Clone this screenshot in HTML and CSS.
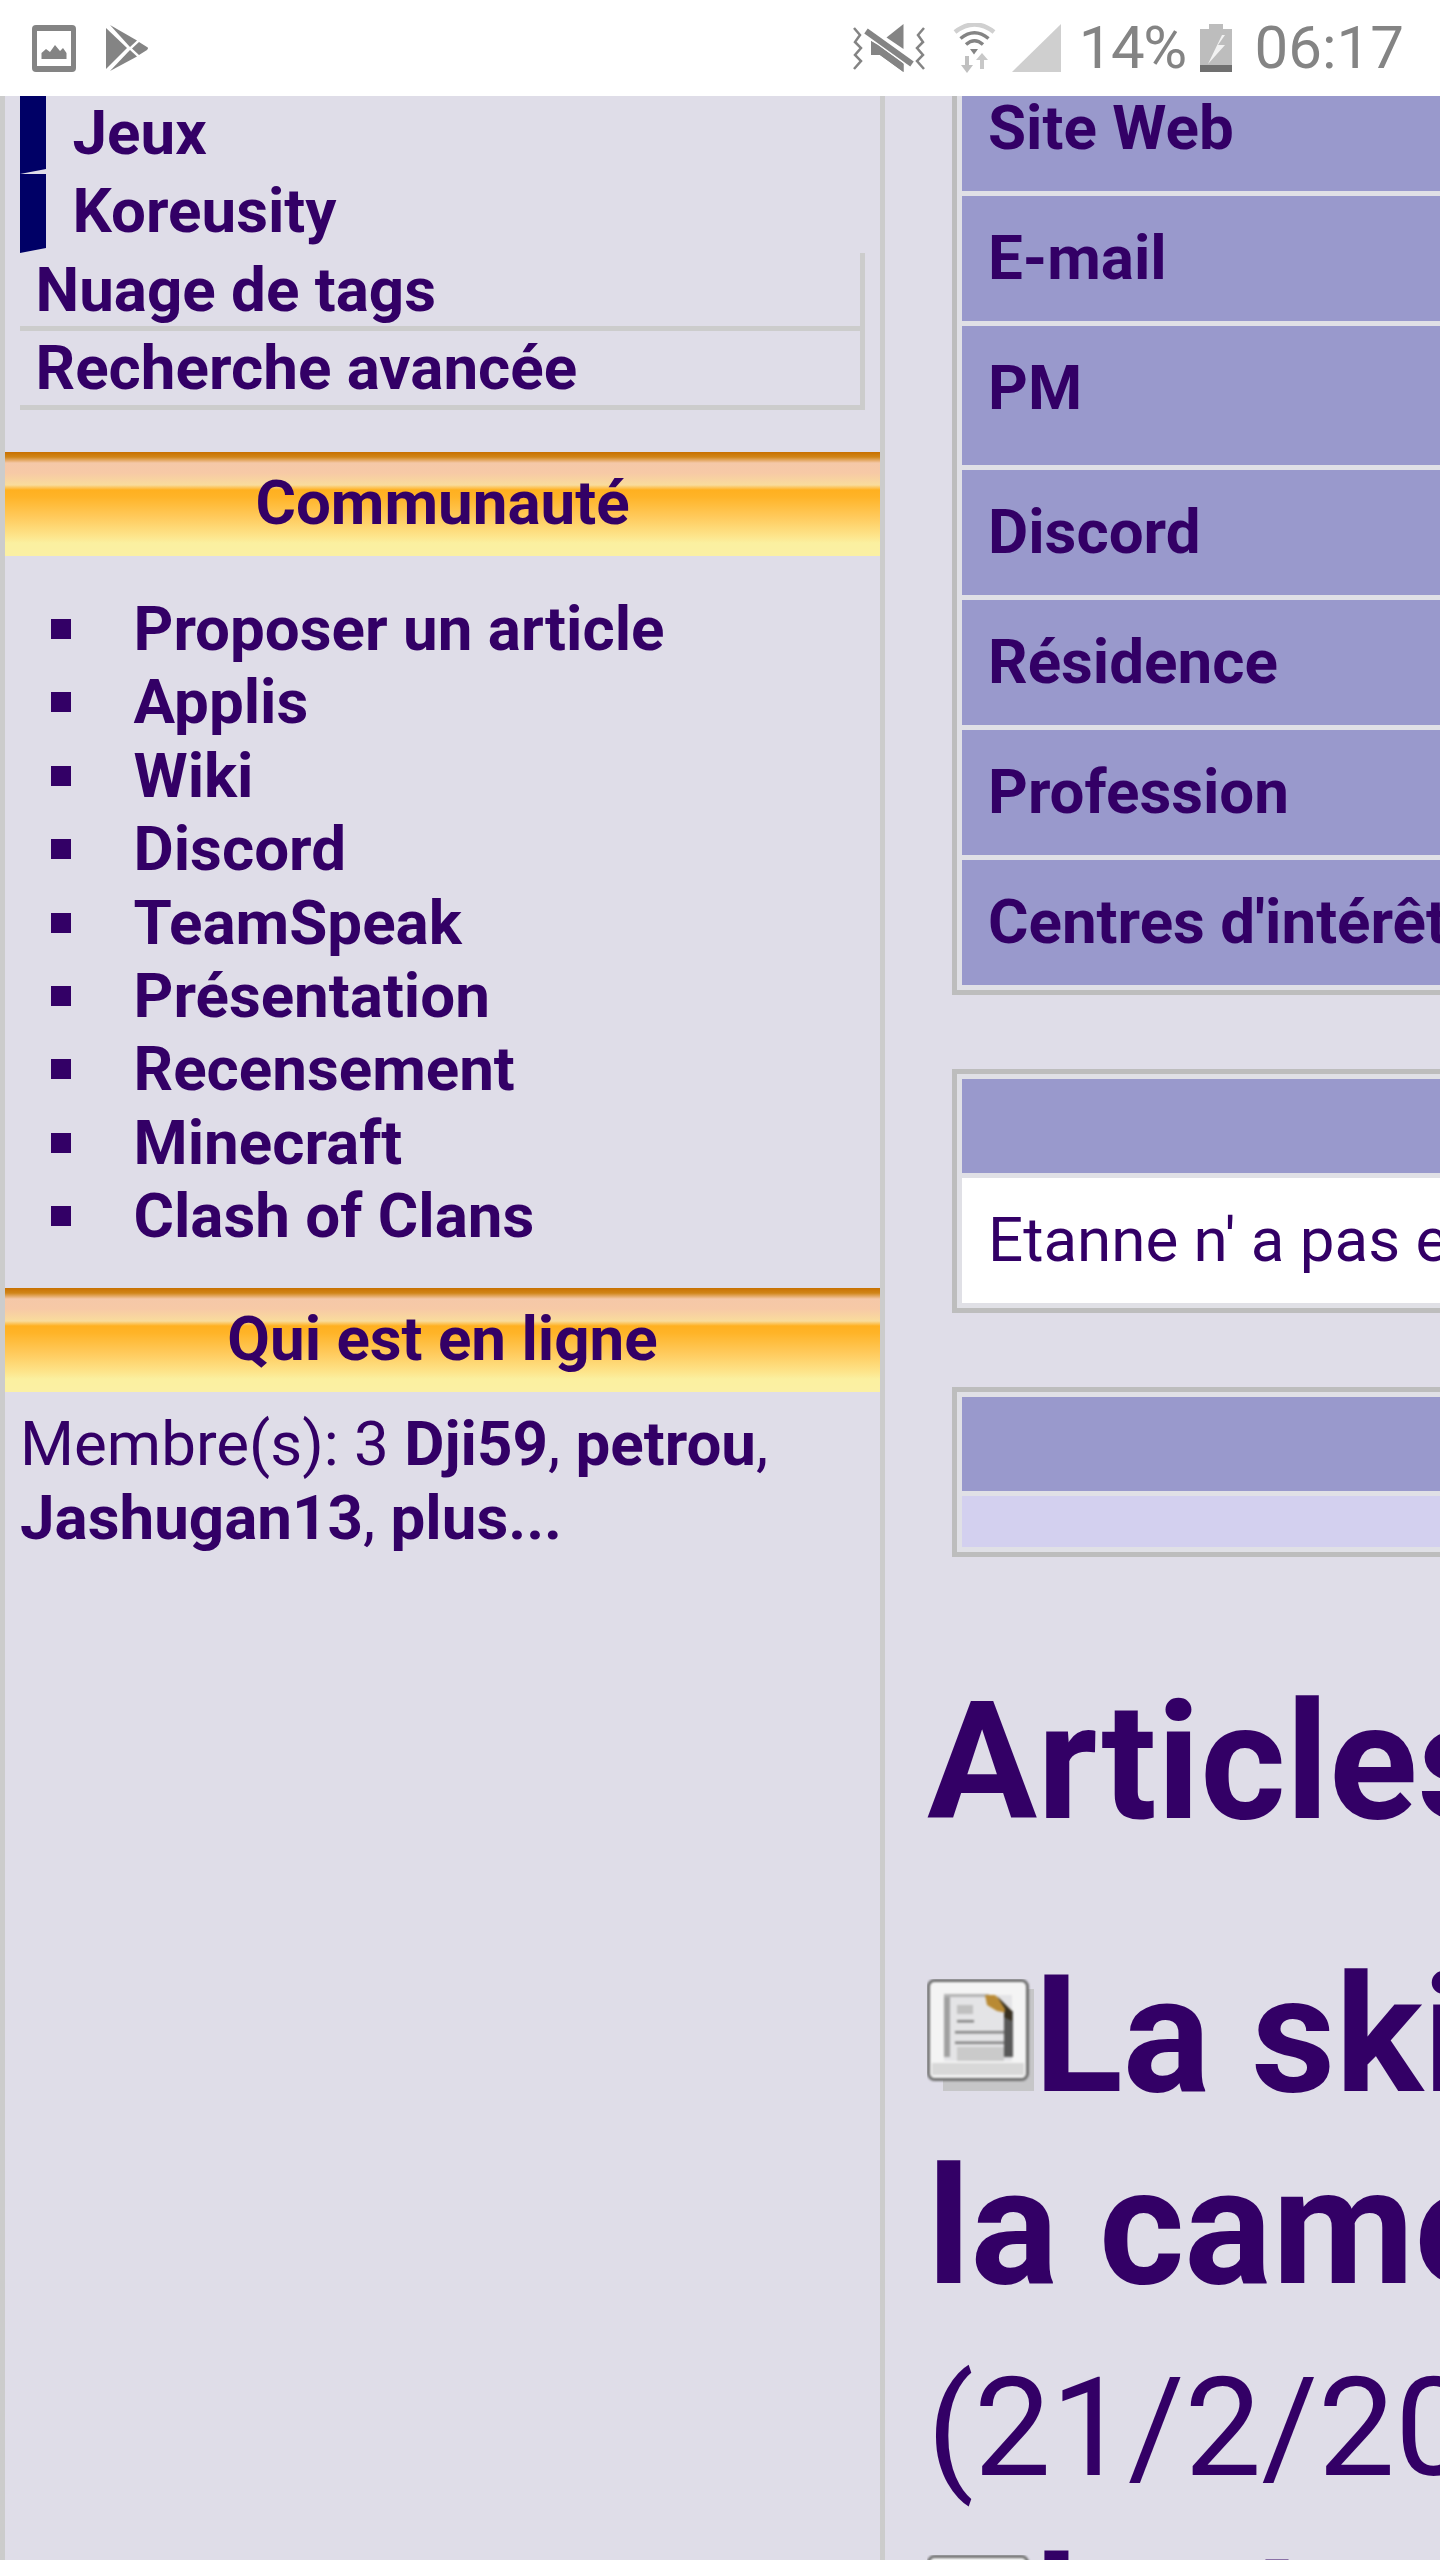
FILE: index.html
```html
<!DOCTYPE html>
<html lang="fr">
<head>
<meta charset="utf-8">
<title>Profil</title>
<link rel="stylesheet" href="styles.css">
</head>
<body>
<svg class="defs" aria-hidden="true">
  <defs>
    <filter id="soft" x="-10%" y="-10%" width="120%" height="120%"><feGaussianBlur stdDeviation="1.1"/></filter>
    <symbol id="doc" viewBox="0 0 107 112">
      <rect x="16" y="10" width="91" height="102" fill="#c6c6c8"/>
      <g filter="url(#soft)">
        <rect x="1.5" y="1.5" width="99" height="99" rx="6" fill="#f4f4f4" stroke="#6e6e6e" stroke-width="3"/>
        <rect x="5" y="84" width="92" height="12" fill="#d8d8d8"/>
        <rect x="17" y="16" width="68" height="66" fill="#e4e4e6"/>
        <rect x="17" y="18" width="6" height="60" fill="#a0a0a0"/>
        <rect x="17" y="15" width="45" height="3" fill="#b4b4b4"/>
        <rect x="30" y="68" width="47" height="14" fill="#cacaca"/>
        <rect x="30" y="26" width="16" height="9" fill="#c0c0c0"/>
        <rect x="30" y="41" width="17" height="2.500" fill="#848484"/>
        <rect x="28" y="52" width="50" height="2.500" fill="#848484"/>
        <rect x="28" y="62.500" width="50" height="2.500" fill="#848484"/>
        <rect x="77" y="32" width="9" height="46" fill="#585858"/>
        <path d="M58 16H68L80 28V34L70 32L60 26Z" fill="#b98a34"/>
        <path d="M70 17L85 32V42L77 38L78 30Z" fill="#38301f"/>
      </g>
    </symbol>
  </defs>
</svg>

<header class="status">
  <div class="status-left">
    <svg class="ic-pic" viewBox="0 0 44 47"><rect width="44" height="47" rx="4" fill="#848484"/><rect x="5" y="6" width="34" height="35" fill="#fff"/><path d="M9.500 34V28L14 24L18 27L23 20L28 26L31 23L34.500 28V34Z" fill="#848484"/></svg>
    <svg class="ic-play" viewBox="0 0 43 46"><path d="M0 3L21 23L0 44Z" fill="#848484"/><path d="M4 0L31 15.500L24 22Z" fill="#848484"/><path d="M33 17L41 22Q43 23 41 25L33 30L26 23.500Z" fill="#848484"/><path d="M4 46L31 31.500L24 25Z" fill="#848484"/></svg>
  </div>
  <div class="status-right">
    <svg class="ic-mute" viewBox="0 0 72 48"><path d="M1 4L7 11L2 18L8 24L2 31L8 37L1 45M71 4L65 11L70 18L64 24L70 31L64 37L71 45" fill="none" stroke="#848484" stroke-width="2.500"/><path d="M50.500 0V25L33.500 13.500Z" fill="#848484"/><path d="M18 17V31H27L50.500 48V38Z" fill="#848484"/><path d="M13 7L59 40" stroke="#fff" stroke-width="9"/><path d="M13 7L59 40" stroke="#848484" stroke-width="6"/><path d="M18 17V31H27L50.500 48V40L25 21Z" fill="#848484"/></svg>
    <svg class="ic-wifi" viewBox="0 0 43 50"><path d="M2 9Q21.500 -6 41 9" fill="none" stroke="#d0d0d0" stroke-width="4.500"/><path d="M7.500 15.500Q21.500 4 35.500 15.500" fill="none" stroke="#848484" stroke-width="3.500"/><path d="M13 21.500Q21.500 14 30 21.500" fill="none" stroke="#848484" stroke-width="3.500"/><path d="M17 26H25L21 31.500Z" fill="#848484"/><path d="M12 33H16V42H20L14 50L8 42H12Z" fill="#c0c0c0"/><path d="M27 46V37H23L29 30L35 37H31V46Z" fill="#c8c8c8"/></svg>
    <svg class="ic-signal" viewBox="0 0 49 48"><path d="M49 0V48H0Z" fill="#cfcfcf"/></svg>
    <span class="status-pct">14%</span>
    <svg class="ic-batt" viewBox="0 0 32 48"><path d="M9 0H23V5H32V48H0V5H9Z" fill="#bdbdbd"/><rect y="41" width="32" height="7" fill="#707070"/><path d="M22 11L8 40L25 21H18L25 11Z" fill="#f2f2f2"/></svg>
    <span class="status-time">06:17</span>
  </div>
</header>

<div class="page">
  <aside class="sidebar">
    <ul class="nav">
      <li class="nav-sub"><a href="#">Jeux</a></li>
      <li class="nav-sub"><a href="#">Koreusity</a></li>
      <li class="nav-main"><a href="#">Nuage de tags</a></li>
      <li class="nav-main"><a href="#">Recherche avancée</a></li>
    </ul>
    <h2 class="band band-first">Communauté</h2>
    <ul class="links">
      <li><a href="#">Proposer un article</a></li>
      <li><a href="#">Applis</a></li>
      <li><a href="#">Wiki</a></li>
      <li><a href="#">Discord</a></li>
      <li><a href="#">TeamSpeak</a></li>
      <li><a href="#">Présentation</a></li>
      <li><a href="#">Recensement</a></li>
      <li><a href="#">Minecraft</a></li>
      <li><a href="#">Clash of Clans</a></li>
    </ul>
    <h2 class="band">Qui est en ligne</h2>
    <p class="online">Membre(s): 3 <a href="#">Dji59</a>, <a href="#">petrou</a>, <a href="#">Jashugan13</a>, <a href="#">plus...</a></p>
  </aside>

  <main class="content">
    <table class="box box-top">
      <tr><th>Site Web</th></tr>
      <tr><th>E-mail</th></tr>
      <tr class="tall"><th>PM</th></tr>
      <tr><th>Discord</th></tr>
      <tr><th>Résidence</th></tr>
      <tr><th>Profession</th></tr>
      <tr><th>Centres d'intérêt</th></tr>
    </table>
    <table class="box">
      <tr><th class="empty"></th></tr>
      <tr><td class="white">Etanne n' a pas e</td></tr>
    </table>
    <table class="box">
      <tr><th class="empty"></th></tr>
      <tr><td class="lilac"></td></tr>
    </table>
    <h1 class="title">Articles</h1>
    <h1 class="articles">
      <svg class="doc"><use href="#doc"/></svg>La ski<br>
      la came<br>
      <span class="date">(21/2/20</span><br>
      <svg class="doc"><use href="#doc"/></svg>Le t
    </h1>
  </main>
</div>
</body>
</html>
```

FILE: styles.css
```css
html, body {
  margin: 0;
  padding: 0;
  height: 2560px;
  overflow: hidden;
}
body {
  width: 1440px;
  background: #dfdde8;
  color: #330066;
  font-family: Roboto, "Liberation Sans", sans-serif;
  font-size: 61.9px;
  line-height: 73.4px;
}
a {
  color: inherit;
  text-decoration: none;
  font-weight: 700;
}
.defs {
  display: none;
}

/* status bar */
.status {
  height: 96px;
  background: #fff;
  display: flex;
  justify-content: space-between;
  align-items: center;
  color: #848484;
  font-size: 60px;
  line-height: 60px;
}
.status-left {
  display: flex;
  align-items: center;
  gap: 30px;
  padding-left: 32px;
}
.status-right {
  display: flex;
  align-items: center;
  padding-right: 36px;
}
.status svg {
  display: block;
}
.ic-pic { width: 44px; height: 47px; }
.ic-play { width: 43px; height: 46px; }
.ic-mute { width: 72px; height: 48px; }
.ic-wifi { width: 43px; height: 50px; margin-left: 28px; }
.ic-signal { width: 49px; height: 48px; margin-left: 16px; }
.ic-batt { width: 32px; height: 48px; margin-left: 14px; }
.status-pct {
  margin-left: 18px;
  letter-spacing: -1.5px;
}
.status-time {
  margin-left: 23px;
}

/* layout */
.page {
  display: flex;
  height: 2464px;
}
.sidebar {
  flex: 0 0 875px;
  border-left: 5px solid #ccc;
  border-right: 5px solid #ccc;
}
.content {
  flex: 1;
  min-width: 0;
  overflow: hidden;
  padding-left: 42px;
}

/* sidebar navigation */
.nav {
  list-style: none;
  margin: 0 15px;
  padding: 0;
  line-height: 71.4px;
}
.nav li {
  padding-top: 2px;
}
.nav-sub {
  border-left: 26px solid #000066;
  border-bottom: 5px solid #dfdde8;
  padding-left: 26.5px;
}
.nav-main {
  border-right: 5px solid #ccc;
  border-bottom: 5px solid #ccc;
  padding-left: 15.5px;
}
.band {
  margin: 0;
  padding: 15px 0 16px;
  font-size: 61.9px;
  line-height: 73.4px;
  font-weight: 700;
  text-align: center;
  background: linear-gradient(to bottom,
    #c87000 0, #d08518 5px, #f5c8a8 11px, #f7c9a6 21px, #f9dc9c 33px,
    #ffb020 38px, #ffb428 45px, #ffca5c 65px, #fde68e 85px, #fbf0a0 91px, #fbf0a4 104px);
}
.band-first {
  margin-top: 42px;
}
.links {
  list-style: none;
  margin: 37px 0 34px;
  padding-left: 128.5px;
}
.links li::before {
  content: "";
  display: inline-block;
  width: 20px;
  height: 20px;
  margin-left: -82.5px;
  margin-right: 62.5px;
  vertical-align: 11px;
  background: #330066;
}
.online {
  margin: 16px 0 0;
  padding: 0 15px;
}

/* profile tables */
.box {
  width: 700px;
  margin: 0 0 74px 25px;
  border: 5px solid #bdbdbd;
  border-spacing: 5px;
  background: #e0e0e6;
  line-height: 73px;
}
.box-top {
  margin-top: -40px;
}
.box th,
.box td {
  padding: 26px;
  text-align: left;
  vertical-align: top;
  white-space: nowrap;
}
.box th {
  background: #9999cc;
  font-weight: 700;
}
.tall th {
  padding-bottom: 40px;
}
.box .empty {
  padding: 0;
  height: 94px;
}
.box .white {
  background: #fff;
}
.box .lilac {
  padding: 0;
  height: 51px;
  background: #d3d0ef;
}

/* headings */
.title,
.articles {
  margin: 0;
  font-size: 164px;
  line-height: 192px;
  font-weight: 700;
  white-space: nowrap;
}
.title {
  margin-top: 109px;
}
.articles {
  margin-top: 81px;
}
.doc {
  width: 107px;
  height: 112px;
}
.date {
  font-size: 137px;
  line-height: 160px;
  font-weight: 400;
}
```
